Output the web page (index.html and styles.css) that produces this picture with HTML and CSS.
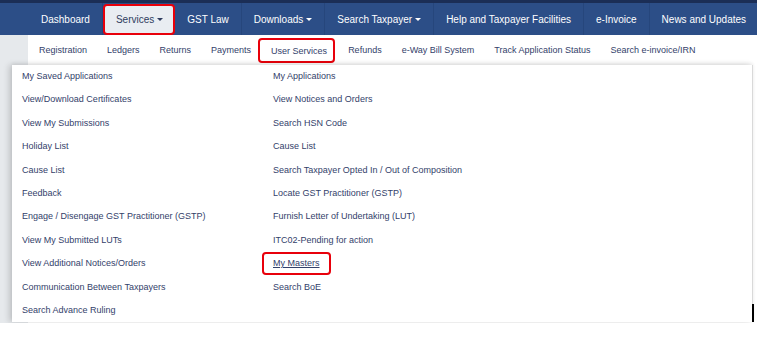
FILE: index.html
```html
<!DOCTYPE html>
<html lang="en">
<head>
    <meta charset="UTF-8">
    <meta name="viewport" content="width=device-width, initial-scale=1.0">
    <title>Services - User Services</title>
    <link rel="stylesheet" href="styles.css">
</head>
<body>
    <div class="top-line"></div>

    <nav class="main-nav">
        <a href="#" class="nav-item">Dashboard</a>
        <a href="#" class="nav-item active marked">Services <span class="caret"></span></a>
        <a href="#" class="nav-item">GST Law</a>
        <a href="#" class="nav-item">Downloads <span class="caret"></span></a>
        <a href="#" class="nav-item">Search Taxpayer <span class="caret"></span></a>
        <a href="#" class="nav-item">Help and Taxpayer Facilities</a>
        <a href="#" class="nav-item">e-Invoice</a>
        <a href="#" class="nav-item">News and Updates</a>
    </nav>

    <div class="stage">
        <div class="sub-nav">
            <a href="#" class="sub-item">Registration</a>
            <a href="#" class="sub-item">Ledgers</a>
            <a href="#" class="sub-item">Returns</a>
            <a href="#" class="sub-item">Payments</a>
            <a href="#" class="sub-item marked">User Services</a>
            <a href="#" class="sub-item">Refunds</a>
            <a href="#" class="sub-item">e-Way Bill System</a>
            <a href="#" class="sub-item">Track Application Status</a>
            <a href="#" class="sub-item">Search e-invoice/IRN</a>
        </div>

        <div class="dropdown">
            <ul class="menu-col">
                <li><a href="#">My Saved Applications</a></li>
                <li><a href="#">View/Download Certificates</a></li>
                <li><a href="#">View My Submissions</a></li>
                <li><a href="#">Holiday List</a></li>
                <li><a href="#">Cause List</a></li>
                <li><a href="#">Feedback</a></li>
                <li><a href="#">Engage / Disengage GST Practitioner (GSTP)</a></li>
                <li><a href="#">View My Submitted LUTs</a></li>
                <li><a href="#">View Additional Notices/Orders</a></li>
                <li><a href="#">Communication Between Taxpayers</a></li>
                <li><a href="#">Search Advance Ruling</a></li>
            </ul>
            <ul class="menu-col">
                <li><a href="#">My Applications</a></li>
                <li><a href="#">View Notices and Orders</a></li>
                <li><a href="#">Search HSN Code</a></li>
                <li><a href="#">Cause List</a></li>
                <li><a href="#">Search Taxpayer Opted In / Out of Composition</a></li>
                <li><a href="#">Locate GST Practitioner (GSTP)</a></li>
                <li><a href="#">Furnish Letter of Undertaking (LUT)</a></li>
                <li><a href="#">ITC02-Pending for action</a></li>
                <li><a href="#" class="marked">My Masters</a></li>
                <li><a href="#">Search BoE</a></li>
            </ul>
            <div class="edge-mark"></div>
        </div>
    </div>
</body>
</html>
```

FILE: styles.css
```css
* {
    margin: 0;
    padding: 0;
    box-sizing: border-box;
}

body {
    font-family: 'Liberation Sans', Arial, sans-serif;
    background: #ffffff;
    color: #33416a;
    overflow: hidden;
}

a {
    text-decoration: none;
    color: inherit;
}

.top-line {
    height: 3px;
    background: #1b2e56;
}

.main-nav {
    display: flex;
    height: 32px;
    padding-left: 29px;
    background: #2c4e87;
    white-space: nowrap;
}

.nav-item {
    display: flex;
    align-items: center;
    padding: 0 12px;
    color: #ffffff;
    font-size: 10px;
    border-right: 1px solid #26467c;
}

.nav-item.active {
    background: #e9edf2;
    color: #2f3d60;
}

.nav-item.marked {
    border: 2px solid #e8000b;
    border-radius: 4px;
    padding: 0 10px 0 11px;
    margin-top: 1px;
}

.caret {
    display: inline-block;
    width: 0;
    height: 0;
    margin-left: 3px;
    border-top: 3px solid currentColor;
    border-left: 3px solid transparent;
    border-right: 3px solid transparent;
}

.stage {
    position: relative;
    background: linear-gradient(to right, #e6e9ec 28px, #ffffff 28px);
    padding-bottom: 1px;
}

.sub-nav {
    display: flex;
    height: 30px;
    margin-left: 28px;
    padding-left: 1px;
    background: #ffffff;
    white-space: nowrap;
}

.sub-item {
    display: flex;
    align-items: center;
    padding: 0 10px;
    font-size: 9px;
}

.sub-item.marked {
    height: 25px;
    margin-top: 3px;
    margin-left: -3px;
    padding: 0 6px 0 11px;
    margin-right: 3px;
    border: 2px solid #e8000b;
    border-radius: 4px;
}

.dropdown {
    position: relative;
    display: grid;
    grid-template-columns: 251px 251px 1fr;
    width: 741px;
    margin-left: 12px;
    background: #ffffff;
    border-right: 1px solid #d9d9d9;
    box-shadow: -3px 0 6px rgba(0, 0, 0, 0.16), 0 -2px 3px rgba(0, 0, 0, 0.05);
}

.menu-col {
    list-style: none;
}

.menu-col li {
    height: 23.4px;
    padding-left: 10px;
    font-size: 9px;
    line-height: 23.4px;
    white-space: nowrap;
}

.menu-col a.marked {
    display: inline-block;
    height: 23px;
    margin-left: -11px;
    padding: 0 9px;
    line-height: 19px;
    text-decoration: underline;
    border: 2px solid #e8000b;
    border-radius: 4px;
}

.edge-mark {
    position: absolute;
    right: -2px;
    bottom: 0;
    width: 2px;
    height: 18px;
    background: #000000;
}
```
